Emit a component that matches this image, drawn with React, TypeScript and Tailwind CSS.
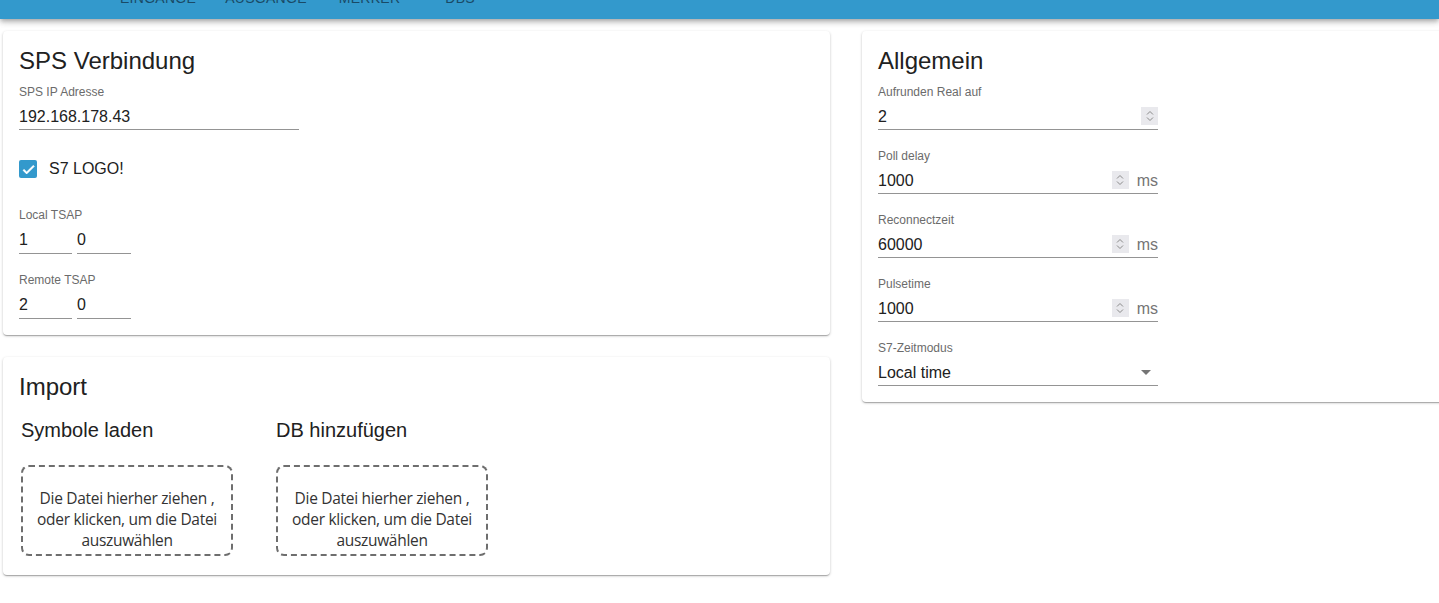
import React from 'react';

const tabs = [
  { label: 'Eingänge', ml: 'ml-[120px]' },
  { label: 'Ausgänge', ml: 'ml-[29px]' },
  { label: 'Merker', ml: 'ml-[32px]' },
  { label: 'DBs', ml: 'ml-[45px]' },
];

const Card = ({ children, className = '' }: { children: React.ReactNode; className?: string }) => (
  <div
    className={`bg-white rounded-[4px] p-4 shadow-[0_1px_3px_0_rgba(0,0,0,0.2),0_1px_1px_0_rgba(0,0,0,0.14),0_2px_1px_-1px_rgba(0,0,0,0.12)] ${className}`}
  >
    {children}
  </div>
);

const Label = ({ children, className = '' }: { children: React.ReactNode; className?: string }) => (
  <div className={`text-[12px] leading-[14px] text-[#6b6b6b] ${className}`}>{children}</div>
);

const Spinner = () => (
  <span className="w-[17px] h-[18px] bg-[#e9e9ed] flex items-center justify-center shrink-0">
    <svg width="8" height="12" viewBox="0 0 8 12" fill="none" stroke="#8a8a8a" strokeWidth="1">
      <path d="M1 4.5 L4 1.5 L7 4.5" />
      <path d="M1 7.5 L4 10.5 L7 7.5" />
    </svg>
  </span>
);

interface InputRowProps {
  value: string;
  spinner?: boolean;
  unit?: string;
  select?: boolean;
  className?: string;
  tall?: boolean;
}

const InputRow = ({ value, spinner, unit, select, className = '', tall }: InputRowProps) => (
  <div
    className={`flex items-start pt-[8px] ${tall ? 'pb-[4px]' : 'pb-[3px]'} border-b border-[#949494] leading-[19px] text-[16px] text-[#212121] ${className}`}
  >
    <span className="flex-1 truncate">{value}</span>
    {spinner && <Spinner />}
    {unit && <span className="ml-2 text-[#757575]">{unit}</span>}
    {select && (
      <svg width="24" height="19" viewBox="0 3 24 19" className="shrink-0">
        <path d="M7 10l5 5 5-5z" fill="#757575" />
      </svg>
    )}
  </div>
);

const Field = ({ label, className = '', ...row }: InputRowProps & { label: string }) => (
  <div className={`w-[280px] ${className}`}>
    <Label>{label}</Label>
    <InputRow {...row} />
  </div>
);

const DropZone = () => (
  <div className="w-[212px] h-[91px] border-2 border-dashed border-[#6e6e6e] rounded-[8px] flex items-center justify-center text-center font-['Open_Sans',sans-serif] text-[15.5px] tracking-[-0.3px] leading-[21px] text-[#333]">
    <p className="mt-[18px]">
      Die Datei hierher ziehen ,<br />
      oder klicken, um die Datei
      <br />
      auszuwählen
    </p>
  </div>
);

export default function App() {
  return (
    <div className="w-[1439px] h-[603px] overflow-hidden bg-white font-['Liberation_Sans',Arial,sans-serif]">
      {/* App bar, scrolled so only the bottom of the tabs shows */}
      <div className="h-[19px] bg-[#3399cc] overflow-hidden relative z-10 shadow-[0_2px_4px_-1px_rgba(0,0,0,0.2),0_4px_5px_0_rgba(0,0,0,0.14),0_1px_10px_0_rgba(0,0,0,0.12)]">
        <div className="flex -mt-[9px] text-[14px] leading-[14px] font-medium uppercase tracking-[0.02em] text-[#1a4a66]">
          {tabs.map((t) => (
            <span key={t.label} className={t.ml}>
              {t.label}
            </span>
          ))}
        </div>
      </div>

      <div className="flex pl-[3px] pt-[12px]">
        {/* Left column */}
        <div className="w-[827px] shrink-0">
          <Card>
            <h2 className="text-[24px] leading-[28px] text-[#212121]">SPS Verbindung</h2>
            <Field className="mt-[10px]" label="SPS IP Adresse" value="192.168.178.43" />

            <div className="mt-[18px] h-[42px] flex items-center">
              <span className="w-[18px] h-[18px] rounded-[2px] bg-[#3399cc] flex items-center justify-center">
                <svg width="15" height="15" viewBox="0 0 24 24">
                  <path d="M9 16.17L4.83 12l-1.42 1.41L9 19 21 7l-1.41-1.41z" fill="#fff" stroke="#fff" strokeWidth="1.5" />
                </svg>
              </span>
              <span className="ml-[12px] text-[16px] text-[#212121]">S7 LOGO!</span>
            </div>

            <Label className="mt-[18px]">Local TSAP</Label>
            <div className="flex gap-[5px]">
              <InputRow tall value="1" className="w-[53px]" />
              <InputRow tall value="0" className="w-[54px]" />
            </div>

            <Label className="mt-[19px]">Remote TSAP</Label>
            <div className="flex gap-[5px]">
              <InputRow tall value="2" className="w-[53px]" />
              <InputRow tall value="0" className="w-[54px]" />
            </div>
          </Card>

          <Card className="mt-[22px] pb-[19px]">
            <h2 className="text-[24px] leading-[28px] text-[#212121]">Import</h2>
            <div className="flex gap-[43px] ml-[2px] mt-[17px]">
              <div className="w-[212px]">
                <h3 className="text-[20px] leading-[24px] text-[#212121]">Symbole laden</h3>
                <div className="mt-[23px]">
                  <DropZone />
                </div>
              </div>
              <div className="w-[212px]">
                <h3 className="text-[20px] leading-[24px] text-[#212121]">DB hinzufügen</h3>
                <div className="mt-[23px]">
                  <DropZone />
                </div>
              </div>
            </div>
          </Card>
        </div>

        {/* Right column */}
        <div className="w-[827px] shrink-0 ml-[32px] self-start">
          <Card>
            <h2 className="text-[24px] leading-[28px] text-[#212121]">Allgemein</h2>
            <Field className="mt-[10px]" label="Aufrunden Real auf" value="2" spinner />
            <Field className="mt-[19px]" label="Poll delay" value="1000" spinner unit="ms" />
            <Field className="mt-[19px]" label="Reconnectzeit" value="60000" spinner unit="ms" />
            <Field className="mt-[19px]" label="Pulsetime" value="1000" spinner unit="ms" />
            <Field className="mt-[19px]" label="S7-Zeitmodus" value="Local time" select />
          </Card>
        </div>
      </div>
    </div>
  );
}
